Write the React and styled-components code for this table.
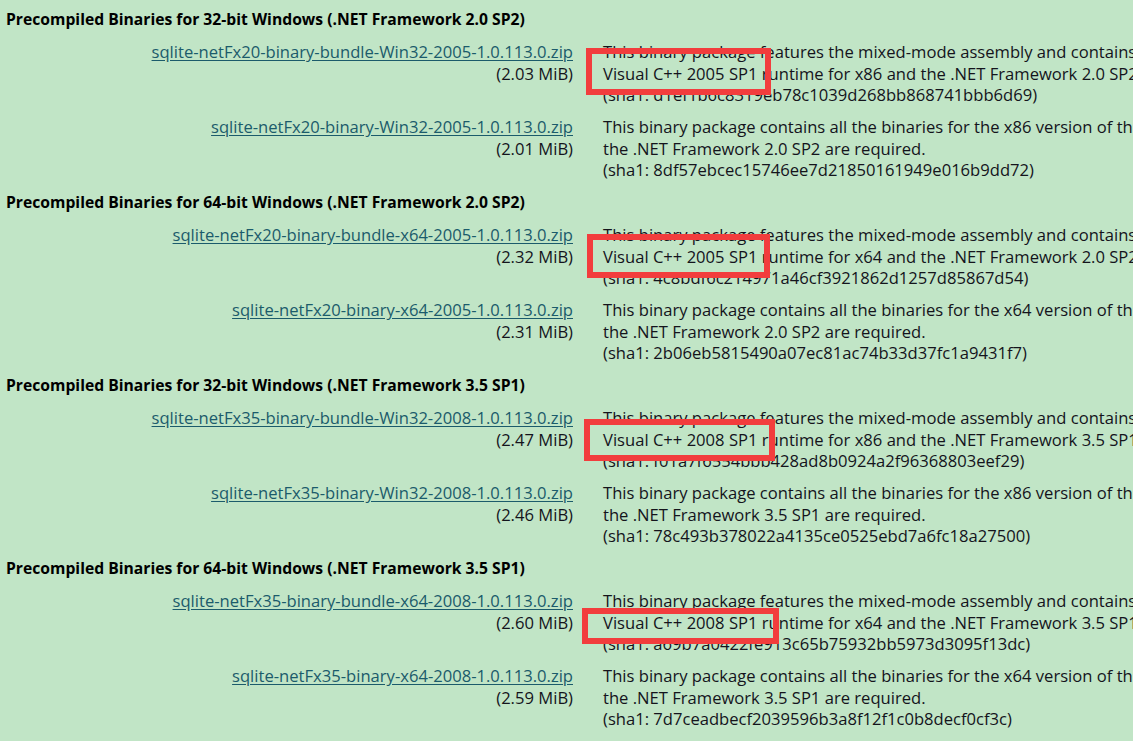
import React from 'react';
import styled, { createGlobalStyle } from 'styled-components';

const sections = [
  {
    title: 'Precompiled Binaries for 32-bit Windows (.NET Framework 2.0 SP2)',
    rows: [
      {
        file: 'sqlite-netFx20-binary-bundle-Win32-2005-1.0.113.0.zip',
        size: '(2.03 MiB)',
        lines: [
          'This binary package features the mixed-mode assembly and contains all the binaries for the x86 version of the System.Data.SQLite 1.0.113.0 (3.32.1) package. The',
          'Visual C++ 2005 SP1 runtime for x86 and the .NET Framework 2.0 SP2 are required.',
          '(sha1: d1ef1b6c8319eb78c1039d268bb868741bbb6d69)',
        ],
        mark: { left: -17, top: 7, width: 185, height: 47 },
      },
      {
        file: 'sqlite-netFx20-binary-Win32-2005-1.0.113.0.zip',
        size: '(2.01 MiB)',
        lines: [
          'This binary package contains all the binaries for the x86 version of the System.Data.SQLite 1.0.113.0 (3.32.1) package. The Visual C++ 2005 SP1 runtime for x86 and',
          'the .NET Framework 2.0 SP2 are required.',
          '(sha1: 8df57ebcec15746ee7d21850161949e016b9dd72)',
        ],
      },
    ],
  },
  {
    title: 'Precompiled Binaries for 64-bit Windows (.NET Framework 2.0 SP2)',
    rows: [
      {
        file: 'sqlite-netFx20-binary-bundle-x64-2005-1.0.113.0.zip',
        size: '(2.32 MiB)',
        lines: [
          'This binary package features the mixed-mode assembly and contains all the binaries for the x64 version of the System.Data.SQLite 1.0.113.0 (3.32.1) package. The',
          'Visual C++ 2005 SP1 runtime for x64 and the .NET Framework 2.0 SP2 are required.',
          '(sha1: 4c8bdf6c214971a46cf3921862d1257d85867d54)',
        ],
        mark: { left: -16, top: 10, width: 183, height: 44 },
      },
      {
        file: 'sqlite-netFx20-binary-x64-2005-1.0.113.0.zip',
        size: '(2.31 MiB)',
        lines: [
          'This binary package contains all the binaries for the x64 version of the System.Data.SQLite 1.0.113.0 (3.32.1) package. The Visual C++ 2005 SP1 runtime for x64 and',
          'the .NET Framework 2.0 SP2 are required.',
          '(sha1: 2b06eb5815490a07ec81ac74b33d37fc1a9431f7)',
        ],
      },
    ],
  },
  {
    title: 'Precompiled Binaries for 32-bit Windows (.NET Framework 3.5 SP1)',
    rows: [
      {
        file: 'sqlite-netFx35-binary-bundle-Win32-2008-1.0.113.0.zip',
        size: '(2.47 MiB)',
        lines: [
          'This binary package features the mixed-mode assembly and contains all the binaries for the x86 version of the System.Data.SQLite 1.0.113.0 (3.32.1) package. The',
          'Visual C++ 2008 SP1 runtime for x86 and the .NET Framework 3.5 SP1 are required.',
          '(sha1: f01a7f6554bbb428ad8b0924a2f96368803eef29)',
        ],
        mark: { left: -19, top: 12, width: 191, height: 42 },
      },
      {
        file: 'sqlite-netFx35-binary-Win32-2008-1.0.113.0.zip',
        size: '(2.46 MiB)',
        lines: [
          'This binary package contains all the binaries for the x86 version of the System.Data.SQLite 1.0.113.0 (3.32.1) package. The Visual C++ 2008 SP1 runtime for x86 and',
          'the .NET Framework 3.5 SP1 are required.',
          '(sha1: 78c493b378022a4135ce0525ebd7a6fc18a27500)',
        ],
      },
    ],
  },
  {
    title: 'Precompiled Binaries for 64-bit Windows (.NET Framework 3.5 SP1)',
    rows: [
      {
        file: 'sqlite-netFx35-binary-bundle-x64-2008-1.0.113.0.zip',
        size: '(2.60 MiB)',
        lines: [
          'This binary package features the mixed-mode assembly and contains all the binaries for the x64 version of the System.Data.SQLite 1.0.113.0 (3.32.1) package. The',
          'Visual C++ 2008 SP1 runtime for x64 and the .NET Framework 3.5 SP1 are required.',
          '(sha1: a69b7a0422fe913c65b75932bb5973d3095f13dc)',
        ],
        mark: { left: -21, top: 18, width: 197, height: 36 },
      },
      {
        file: 'sqlite-netFx35-binary-x64-2008-1.0.113.0.zip',
        size: '(2.59 MiB)',
        lines: [
          'This binary package contains all the binaries for the x64 version of the System.Data.SQLite 1.0.113.0 (3.32.1) package. The Visual C++ 2008 SP1 runtime for x64 and',
          'the .NET Framework 3.5 SP1 are required.',
          '(sha1: 7d7ceadbecf2039596b3a8f12f1c0b8decf0cf3c)',
        ],
      },
    ],
  },
];

const App = () => {
  return (
    <>
      <GlobalStyle />
      <Page>
        {sections.map((section) => (
          <Section key={section.title}>
            <Heading>{section.title}</Heading>
            {section.rows.map((row) => (
              <Row key={row.file}>
                <FileCell>
                  <FileLink href="#">{row.file}</FileLink>
                  <Size>{row.size}</Size>
                </FileCell>
                <Description>
                  {row.lines.map((line) => (
                    <Line key={line}>{line}</Line>
                  ))}
                  {row.mark && (
                    <Highlight
                      $left={row.mark.left}
                      $top={row.mark.top}
                      $width={row.mark.width}
                      $height={row.mark.height}
                    />
                  )}
                </Description>
              </Row>
            ))}
          </Section>
        ))}
      </Page>
    </>
  );
};

const GlobalStyle = createGlobalStyle`
  html, body {
    margin: 0;
    padding: 0;
    background: #c1e5c6;
    overflow: hidden;
  }
`;

const Page = styled.div`
  display: flex;
  flex-direction: column;
  gap: 11.5px;
  padding: 9px 0 0 6px;
  width: 1133px;
  height: 741px;
  box-sizing: border-box;
  overflow: hidden;
  font-family: "Open Sans", "Noto Sans", sans-serif;
  font-size: 16.6px;
  line-height: 21.5px;
  color: #14141c;
`;

const Section = styled.section`
  display: flex;
  flex-direction: column;
  gap: 10.5px;
`;

const Heading = styled.h3`
  margin: 0;
  font-size: 15.7px;
  font-weight: 700;
  line-height: 21.5px;
  color: #000;
`;

const Row = styled.div`
  display: grid;
  grid-template-columns: 567px 1fr;
  column-gap: 30px;
`;

const FileCell = styled.div`
  display: flex;
  flex-direction: column;
  align-items: flex-end;
`;

const FileLink = styled.a`
  color: #1b5b6b;
  text-decoration: underline;
  text-underline-offset: 2px;
`;

const Size = styled.span`
  color: #14141c;
`;

const Description = styled.div`
  position: relative;
  min-width: 0;
`;

const Line = styled.div`
  white-space: nowrap;
`;

const Highlight = styled.div`
  position: absolute;
  left: ${(p) => p.$left}px;
  top: ${(p) => p.$top}px;
  width: ${(p) => p.$width}px;
  height: ${(p) => p.$height}px;
  border: 6px solid #f23d3d;
  box-sizing: border-box;
`;

export default App;
